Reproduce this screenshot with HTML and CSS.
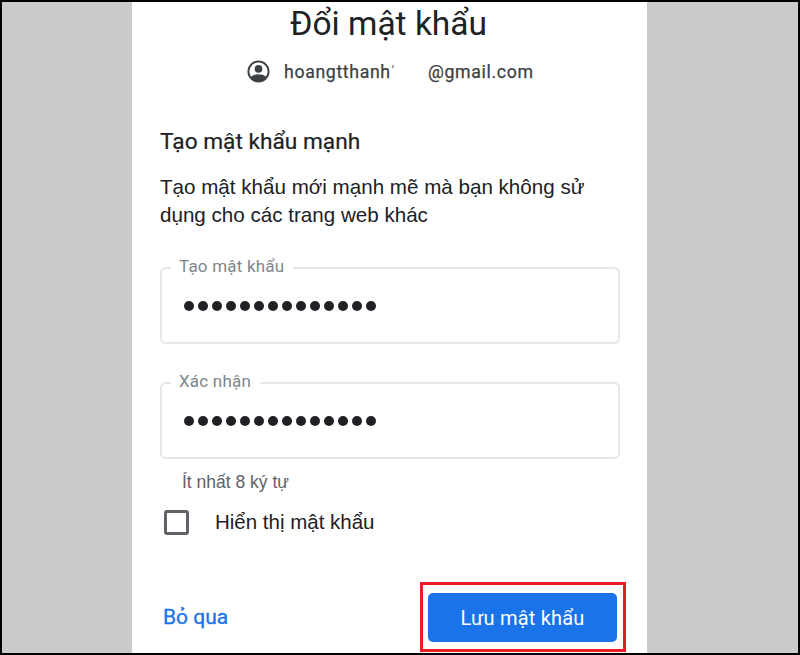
FILE: index.html
```html
<!DOCTYPE html>
<html lang="vi">
<head>
<meta charset="utf-8">
<title>Đổi mật khẩu</title>
<link rel="stylesheet" href="styles.css">
</head>
<body>
<div class="frame">
  <main class="card">
    <h1 class="title">Đổi mật khẩu</h1>
    <div class="account">
      <svg class="avatar" viewBox="0 0 24 24" aria-hidden="true">
        <path fill="#3c4043" fill-rule="evenodd" d="M12 .5a11.5 11.5 0 1 0 0 23 11.5 11.5 0 0 0 0-23zm0 2.100a9.400 9.400 0 0 1 7.700 14.800c-1.900-1.700-4.800-2.500-7.700-2.500s-5.800.8-7.700 2.500A9.400 9.400 0 0 1 12 2.600z"/>
        <circle fill="#3c4043" cx="12" cy="9.300" r="4"/>
      </svg>
      <span class="user">hoangtthanh</span>
      <span class="domain">@gmail.com</span>
    </div>
    <h2 class="heading">Tạo mật khẩu mạnh</h2>
    <p class="intro">Tạo mật khẩu mới mạnh mẽ mà bạn không sử dụng cho các trang web khác</p>
    <div class="field">
      <span class="label">Tạo mật khẩu</span>
      <div class="dots"><i></i><i></i><i></i><i></i><i></i><i></i><i></i><i></i><i></i><i></i><i></i><i></i><i></i><i></i></div>
    </div>
    <div class="field second">
      <span class="label">Xác nhận</span>
      <div class="dots"><i></i><i></i><i></i><i></i><i></i><i></i><i></i><i></i><i></i><i></i><i></i><i></i><i></i><i></i></div>
    </div>
    <p class="hint">Ít nhất 8 ký tự</p>
    <div class="show">
      <span class="checkbox"></span>
      <span class="show-text">Hiển thị mật khẩu</span>
    </div>
    <div class="actions">
      <a class="skip">Bỏ qua</a>
      <div class="highlight"><button class="save">Lưu mật khẩu</button></div>
    </div>
  </main>
</div>
</body>
</html>
```
FILE: styles.css
```css
* { box-sizing: border-box; }
html, body { margin: 0; padding: 0; }
body { width: 800px; height: 655px; overflow: hidden; font-family: Roboto, "Liberation Sans", sans-serif; }
.frame {
  width: 800px; height: 655px;
  background: #cbcbcb;
  border: 2px solid #000;
  display: flex; justify-content: center;
  padding-right: 21px;
}
.card {
  width: 515px; height: 651px;
  background: #fff;
  padding: 0 27px 0 28px;
  display: flex; flex-direction: column;
}
.title {
  margin: 2px 0 0; height: 42px;
  padding-right: 3px;
  font-size: 33.500px; line-height: 40px; font-weight: 400;
  color: #202124; text-align: center;
}
.account {
  margin-top: 13px; height: 24px;
  display: flex; align-items: center;
  padding-left: 87px;
  font-size: 17.700px; font-weight: 400; letter-spacing: .65px; color: #3c4043;
  -webkit-text-stroke: .25px #3c4043;
}
.avatar { width: 23px; height: 23px; flex: none; }
.user { margin: 2px 35px 0 14px; width: 109px; white-space: nowrap; }
.user::after { content: "'"; margin-left: 1px; color: #9aa0a6; font-size: 13px; vertical-align: 3px; }
.domain { margin-top: 2px; }
.heading {
  margin: 46px 0 0; height: 26px;
  font-size: 22.700px; line-height: 26px; font-weight: 400; color: #202124;
  -webkit-text-stroke: .2px #202124;
}
.intro {
  margin: 18px 0 0; width: 450px;
  font-family: "Liberation Sans", Arial, sans-serif;
  font-size: 20.600px; line-height: 28px; color: #202124;
}
.field {
  position: relative;
  margin-top: 38px;
  height: 77px;
  border: 2px solid #e6e6eb;
  border-radius: 6px;
  padding-left: 21.500px;
  display: flex; align-items: center;
}
.field.second { margin-top: 38px; }
.label {
  position: absolute; left: 8.500px; top: -13px;
  padding: 0 8.500px;
  background: #fff;
  font-size: 17px; line-height: 20px; letter-spacing: .2px; color: #80868b;
}
.dots { display: flex; gap: 4.070px; margin-top: 1px; }
.dots i { display: block; width: 10px; height: 10px; border-radius: 50%; background: #202124; }
.hint {
  margin: 13px 0 0 22px; height: 20px;
  font-family: "Liberation Sans", Arial, sans-serif;
  font-size: 17.500px; line-height: 20px; color: #5f6368;
}
.show {
  margin-top: 18px; height: 25px;
  display: flex; align-items: center;
  padding-left: 4px;
}
.checkbox {
  width: 25px; height: 25px; flex: none;
  border: 3px solid #5f6368; border-radius: 3px;
}
.show-text {
  margin: -2px 0 0 26px;
  font-family: "Liberation Sans", Arial, sans-serif;
  font-size: 20.500px; color: #202124;
}
.actions {
  margin-top: 47px;
  display: flex; justify-content: space-between; align-items: center;
  padding-left: 3px;
}
.skip {
  font-size: 21px; font-weight: 400; color: #1a73e8;
  -webkit-text-stroke: .3px #1a73e8;
}
.highlight {
  width: 206px; height: 70px;
  border: 3px solid #ed1c24;
  padding: 8px 6px 7px 5px;
  margin-right: -6px;
}
.save {
  display: block; width: 100%; height: 100%;
  border: 0; border-radius: 5px;
  background: #1a73e8; color: #fff;
  font-family: Roboto, "Liberation Sans", sans-serif;
  font-size: 20px; font-weight: 400; letter-spacing: .2px;
  padding: 0;
}
```
